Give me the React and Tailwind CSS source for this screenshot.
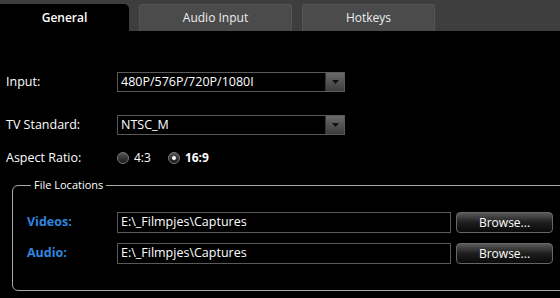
const tabs = [
  { label: "General", active: true, w: "w-[129px]" },
  { label: "Audio Input", active: false, w: "w-[153px]" },
  { label: "Hotkeys", active: false, w: "w-[133px]" },
];

function Select({ value }) {
  return (
    <div className="flex h-[20px] w-[228px] border border-[#5a5a5a] bg-black">
      <div className="flex flex-1 items-center pl-[3px] text-[12.5px] text-white">{value}</div>
      <div className="flex w-[19px] items-center justify-center border-l border-[#333] bg-gradient-to-b from-[#6a6a6a] to-[#3c3c3c]">
        <svg width="7" height="4" viewBox="0 0 7 4">
          <path d="M0 0h7L3.5 4z" fill="#111" />
        </svg>
      </div>
    </div>
  );
}

function Radio({ label, checked }) {
  return (
    <div className="flex items-center gap-[5px]">
      <div className="flex h-[12px] w-[12px] items-center justify-center rounded-full border border-[#777] bg-gradient-to-b from-[#555] to-[#1a1a1a]">
        {checked && <div className="h-[4px] w-[4px] rounded-full bg-white" />}
      </div>
      <span className={checked ? "text-[12px] font-bold text-white" : "text-[12px] text-white"}>{label}</span>
    </div>
  );
}

function PathRow({ label, path }) {
  return (
    <div className="flex items-center">
      <div className="w-[104px] pl-[14px] text-[12.5px] font-bold text-[#2f86e0]">{label}</div>
      <div className="flex h-[21px] w-[334px] items-center border border-[#5a5a5a] pl-[3px] text-[12.5px] text-white">
        {path}
      </div>
      <button className="ml-[5px] h-[21px] w-[97px] rounded-[4px] border border-[#666] bg-gradient-to-b from-[#5a5a5a] via-[#1e1e1e] to-[#0a0a0a] text-[12px] text-white">
        Browse...
      </button>
    </div>
  );
}

export default function App() {
  return (
    <div className="h-[298px] w-[560px] overflow-hidden bg-black font-['Open_Sans',sans-serif] text-white">
      <div className="flex h-[31px] items-end gap-[10px] bg-[#3e3e3e]">
        {tabs.map((t) => (
          <div
            key={t.label}
            className={
              t.active
                ? `${t.w} flex h-[27px] items-center justify-center rounded-tr-[5px] bg-black text-[12px] font-semibold text-white`
                : `${t.w} flex h-[27px] items-center justify-center rounded-t-[3px] border-x border-t border-[#555] bg-[#4b4b4b] text-[12px] text-[#eee]`
            }
          >
            {t.label}
          </div>
        ))}
      </div>

      <div className="flex flex-col pl-[6px] pt-[41px]">
        <div className="flex items-center">
          <div className="w-[111px] text-[12.5px]">Input:</div>
          <Select value="480P/576P/720P/1080I" />
        </div>
        <div className="mt-[23px] flex items-center">
          <div className="w-[111px] text-[12.5px]">TV Standard:</div>
          <Select value="NTSC_M" />
        </div>
        <div className="mt-[14px] flex items-center">
          <div className="w-[111px] text-[12.5px]">Aspect Ratio:</div>
          <div className="flex items-center gap-[17px]">
            <Radio label="4:3" />
            <Radio label="16:9" checked />
          </div>
        </div>
      </div>

      <fieldset className="ml-[12px] mt-[9px] h-[114px] w-[560px] rounded-[6px] border border-[#aaa] pt-[19px]">
        <legend className="ml-[18px] px-[3px] text-[11px] text-white">File Locations</legend>
        <div className="flex flex-col gap-[10px]">
          <PathRow label="Videos:" path="E:\_Filmpjes\Captures" />
          <PathRow label="Audio:" path="E:\_Filmpjes\Captures" />
        </div>
      </fieldset>
    </div>
  );
}
